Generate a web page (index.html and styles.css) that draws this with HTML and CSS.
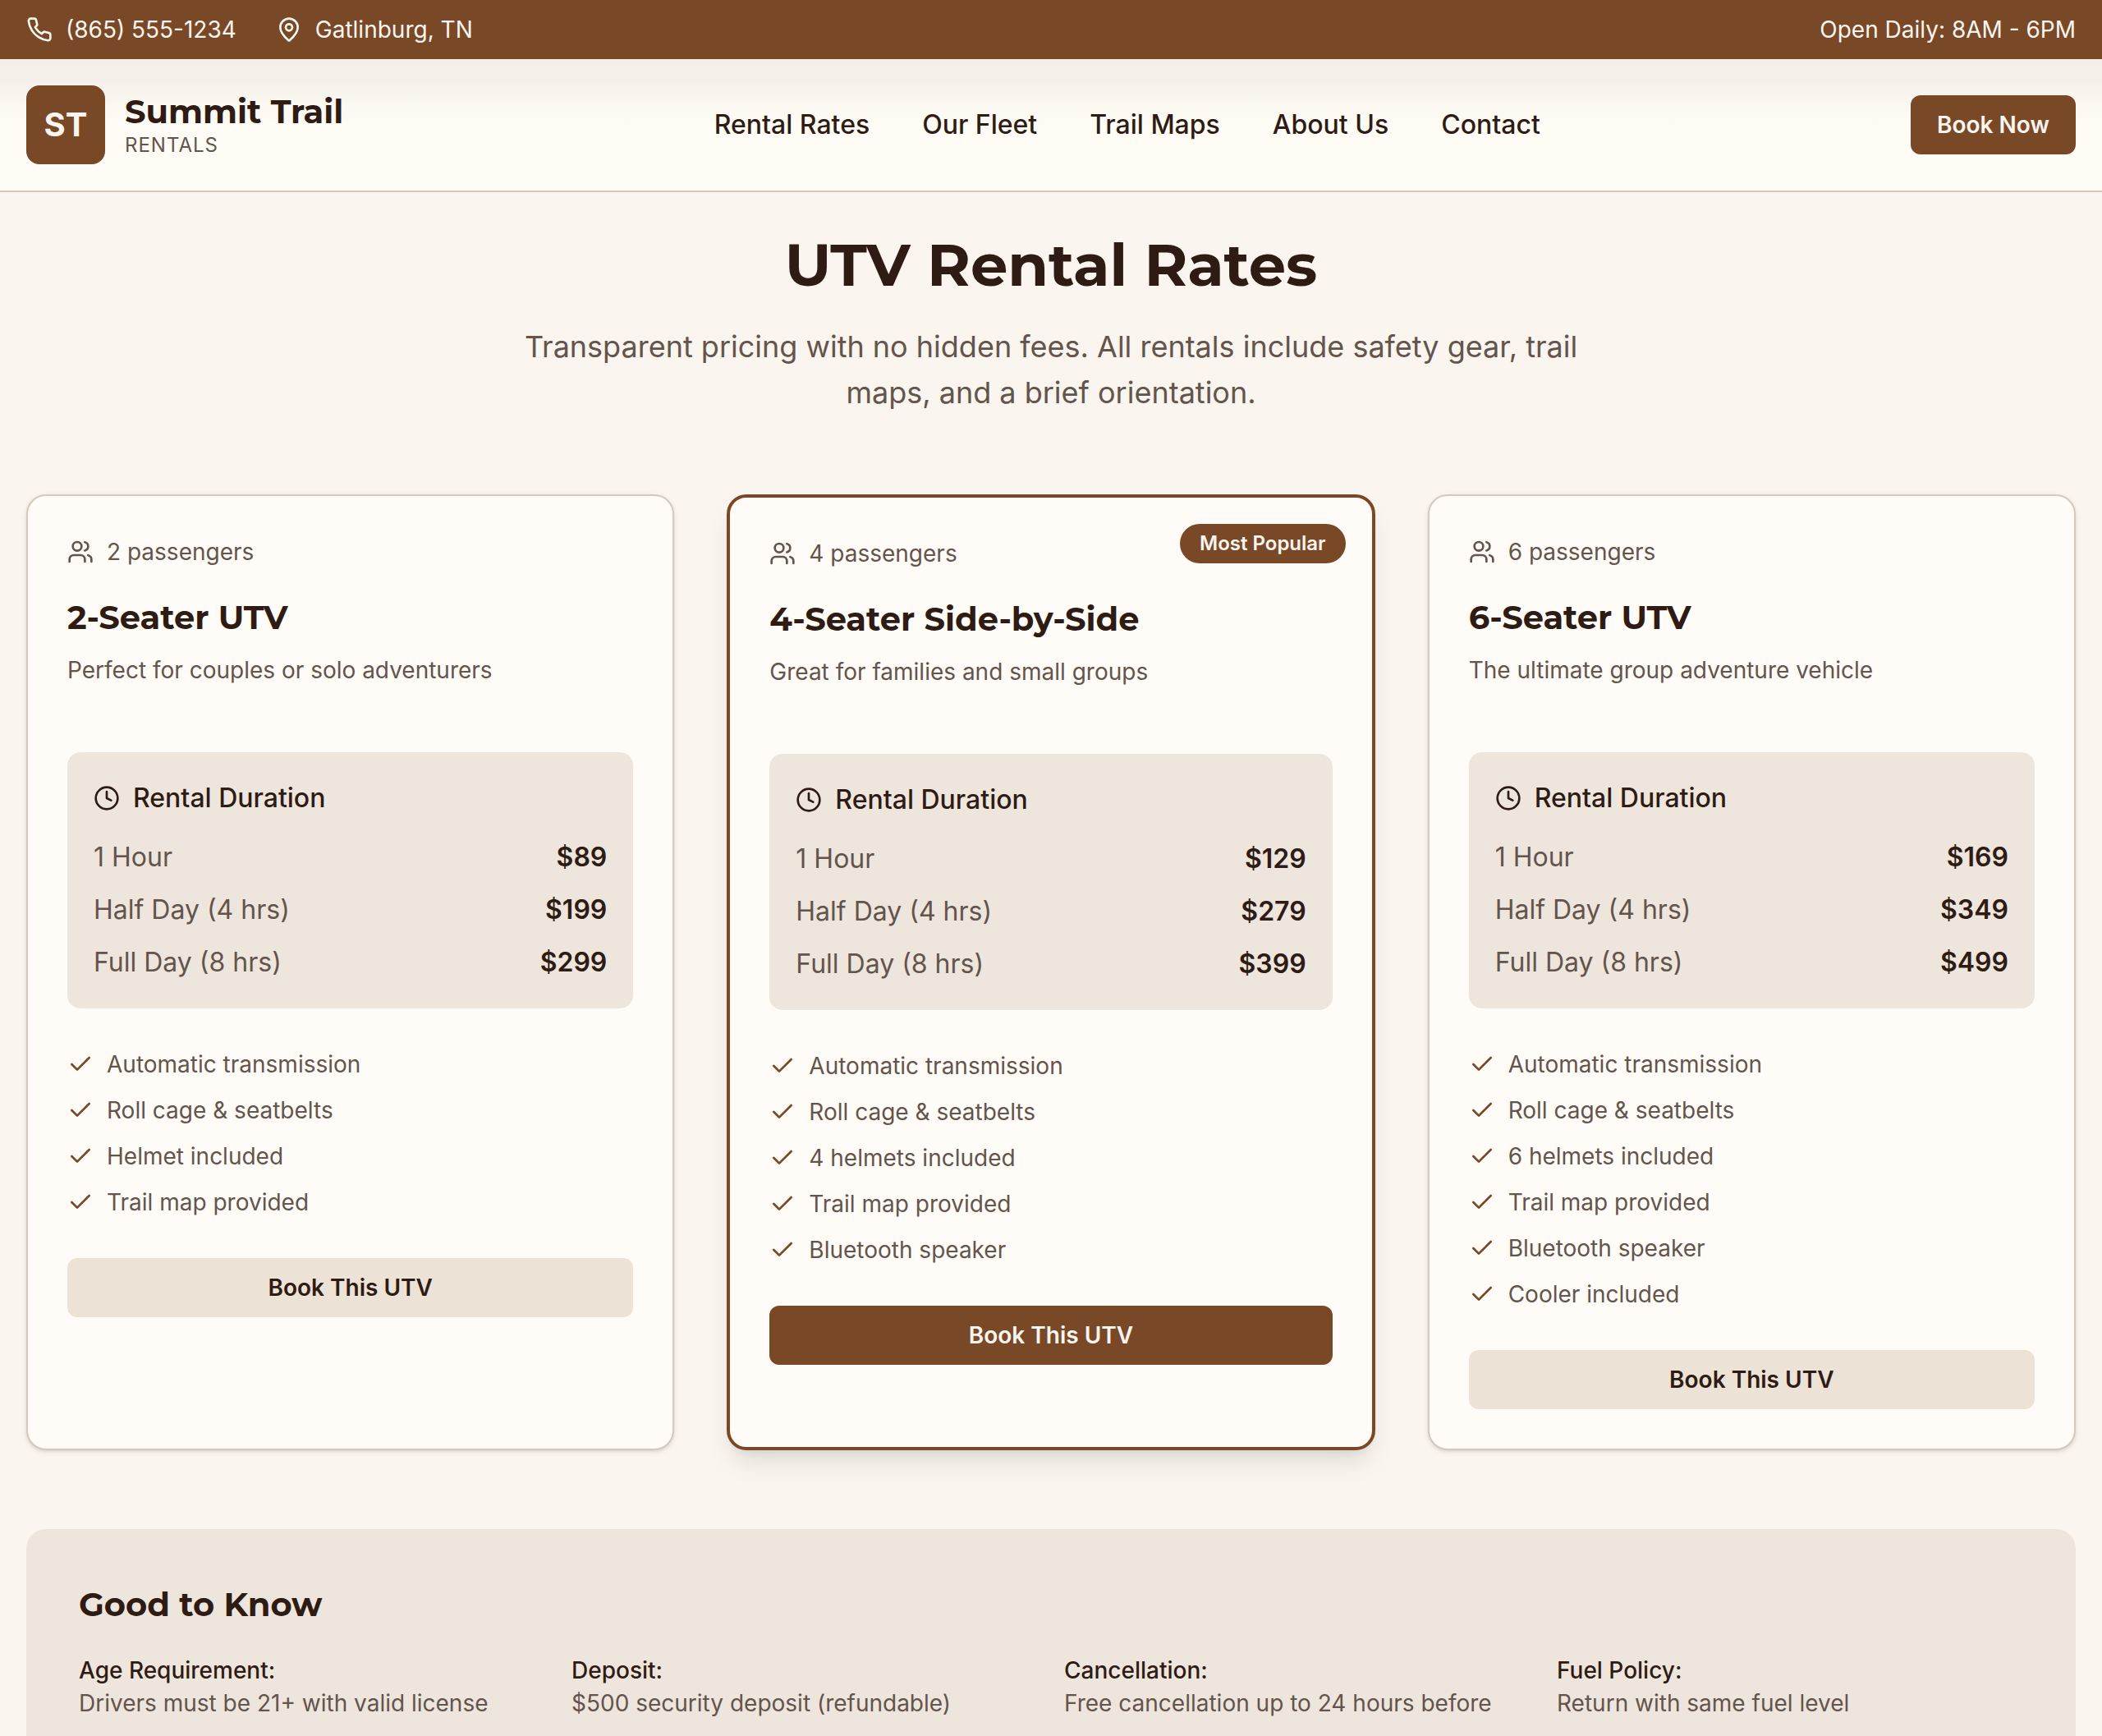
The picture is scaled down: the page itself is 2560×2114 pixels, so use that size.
FILE: index.html
```html
<!doctype html>
<html lang="en">
<head>
<meta charset="utf-8">
<meta name="viewport" content="width=device-width, initial-scale=1">
<title>Summit Trail Rentals - UTV Rental Rates</title>
<link rel="stylesheet" href="styles.css">
</head>

<body>
<!-- icons -->
<svg class="sprite" aria-hidden="true">
	<symbol id="phone" viewBox="0 0 24 24"><path d="M22 16.92v3a2 2 0 0 1-2.18 2 19.79 19.79 0 0 1-8.63-3.07 19.5 19.5 0 0 1-6-6 19.79 19.79 0 0 1-3.07-8.67A2 2 0 0 1 4.11 2h3a2 2 0 0 1 2 1.72 12.84 12.84 0 0 0 .7 2.81 2 2 0 0 1-.45 2.11L8.09 9.91a16 16 0 0 0 6 6l1.27-1.27a2 2 0 0 1 2.11-.45 12.84 12.84 0 0 0 2.81.7A2 2 0 0 1 22 16.92z"/></symbol>
	<symbol id="pin" viewBox="0 0 24 24"><path d="M20 10c0 4.993-5.539 10.193-7.399 11.799a1 1 0 0 1-1.202 0C9.539 20.193 4 14.993 4 10a8 8 0 0 1 16 0"/><circle cx="12" cy="10" r="3"/></symbol>
	<symbol id="users" viewBox="0 0 24 24"><path d="M16 21v-2a4 4 0 0 0-4-4H6a4 4 0 0 0-4 4v2"/><circle cx="9" cy="7" r="4"/><path d="M22 21v-2a4 4 0 0 0-3-3.87"/><path d="M16 3.13a4 4 0 0 1 0 7.75"/></symbol>
	<symbol id="clock" viewBox="0 0 24 24"><circle cx="12" cy="12" r="10"/><path d="M12 6v6l4 2"/></symbol>
	<symbol id="check" viewBox="0 0 24 24"><path d="M20 6 9 17l-5-5"/></symbol>
</svg>

<div class="topbar">
	<div class="contact">
		<a href="tel:8655551234"><svg class="icon"><use href="#phone"/></svg>(865) 555-1234</a>
		<span><svg class="icon"><use href="#pin"/></svg>Gatlinburg, TN</span>
	</div>
	<span>Open Daily: 8AM - 6PM</span>
</div>

<header class="header">
	<a href="#" class="brand">
		<span class="logo">ST</span>
		<span class="brand-text">
			<span class="brand-name">Summit Trail</span>
			<span class="brand-sub">RENTALS</span>
		</span>
	</a>
	<nav class="nav">
		<a href="#rates">Rental Rates</a>
		<a href="#fleet">Our Fleet</a>
		<a href="#maps">Trail Maps</a>
		<a href="#about">About Us</a>
		<a href="#contact">Contact</a>
	</nav>
	<button type="button" class="btn btn-primary">Book Now</button>
</header>

<main class="main" id="rates">
	<div class="intro">
		<h1>UTV Rental Rates</h1>
		<p>Transparent pricing with no hidden fees. All rentals include safety gear, trail maps, and a brief orientation.</p>
	</div>

	<div class="cards" id="fleet">
		<section class="card">
			<div class="seats"><svg class="icon"><use href="#users"/></svg>2 passengers</div>
			<h2>2-Seater UTV</h2>
			<p class="desc">Perfect for couples or solo adventurers</p>
			<div class="rates">
				<h3><svg class="icon"><use href="#clock"/></svg>Rental Duration</h3>
				<table>
					<tr><th scope="row">1 Hour</th><td>$89</td></tr>
					<tr><th scope="row">Half Day (4 hrs)</th><td>$199</td></tr>
					<tr><th scope="row">Full Day (8 hrs)</th><td>$299</td></tr>
				</table>
			</div>
			<ul class="features">
				<li><svg class="icon"><use href="#check"/></svg>Automatic transmission</li>
				<li><svg class="icon"><use href="#check"/></svg>Roll cage &amp; seatbelts</li>
				<li><svg class="icon"><use href="#check"/></svg>Helmet included</li>
				<li><svg class="icon"><use href="#check"/></svg>Trail map provided</li>
			</ul>
			<button type="button" class="btn btn-secondary">Book This UTV</button>
		</section>

		<section class="card card-popular">
			<span class="badge">Most Popular</span>
			<div class="seats"><svg class="icon"><use href="#users"/></svg>4 passengers</div>
			<h2>4-Seater Side-by-Side</h2>
			<p class="desc">Great for families and small groups</p>
			<div class="rates">
				<h3><svg class="icon"><use href="#clock"/></svg>Rental Duration</h3>
				<table>
					<tr><th scope="row">1 Hour</th><td>$129</td></tr>
					<tr><th scope="row">Half Day (4 hrs)</th><td>$279</td></tr>
					<tr><th scope="row">Full Day (8 hrs)</th><td>$399</td></tr>
				</table>
			</div>
			<ul class="features">
				<li><svg class="icon"><use href="#check"/></svg>Automatic transmission</li>
				<li><svg class="icon"><use href="#check"/></svg>Roll cage &amp; seatbelts</li>
				<li><svg class="icon"><use href="#check"/></svg>4 helmets included</li>
				<li><svg class="icon"><use href="#check"/></svg>Trail map provided</li>
				<li><svg class="icon"><use href="#check"/></svg>Bluetooth speaker</li>
			</ul>
			<button type="button" class="btn btn-primary">Book This UTV</button>
		</section>

		<section class="card">
			<div class="seats"><svg class="icon"><use href="#users"/></svg>6 passengers</div>
			<h2>6-Seater UTV</h2>
			<p class="desc">The ultimate group adventure vehicle</p>
			<div class="rates">
				<h3><svg class="icon"><use href="#clock"/></svg>Rental Duration</h3>
				<table>
					<tr><th scope="row">1 Hour</th><td>$169</td></tr>
					<tr><th scope="row">Half Day (4 hrs)</th><td>$349</td></tr>
					<tr><th scope="row">Full Day (8 hrs)</th><td>$499</td></tr>
				</table>
			</div>
			<ul class="features">
				<li><svg class="icon"><use href="#check"/></svg>Automatic transmission</li>
				<li><svg class="icon"><use href="#check"/></svg>Roll cage &amp; seatbelts</li>
				<li><svg class="icon"><use href="#check"/></svg>6 helmets included</li>
				<li><svg class="icon"><use href="#check"/></svg>Trail map provided</li>
				<li><svg class="icon"><use href="#check"/></svg>Bluetooth speaker</li>
				<li><svg class="icon"><use href="#check"/></svg>Cooler included</li>
			</ul>
			<button type="button" class="btn btn-secondary">Book This UTV</button>
		</section>
	</div>

	<section class="info">
		<h2>Good to Know</h2>
		<dl>
			<div><dt>Age Requirement:</dt><dd>Drivers must be 21+ with valid license</dd></div>
			<div><dt>Deposit:</dt><dd>$500 security deposit (refundable)</dd></div>
			<div><dt>Cancellation:</dt><dd>Free cancellation up to 24 hours before</dd></div>
			<div><dt>Fuel Policy:</dt><dd>Return with same fuel level</dd></div>
		</dl>
	</section>
</main>
</body>
</html>
```

FILE: styles.css
```css
*{ box-sizing:border-box; margin:0; padding:0;}
body{ background:#faf5ef; color:#2e1c14; font:28px/40px Inter, "Liberation Sans", sans-serif;}
a{ color:inherit; text-decoration:none;}
h1,h2,.brand-name{ font-family:Montserrat, Inter, sans-serif; font-weight:700;}
h2{ font-size:40px; line-height:56px;}
.sprite{ display:none;}
.icon{ width:32px; height:32px; flex:none; fill:none; stroke:currentColor; stroke-width:2; stroke-linecap:round; stroke-linejoin:round;}

/* top bar */
.topbar{ display:flex; justify-content:space-between; padding:16px 32px; background:#784827; color:#faf5ef;}
.contact{ display:flex; gap:48px;}
.contact a,.contact span{ display:flex; align-items:center; gap:16px;}

/* header */
.header{ display:flex; justify-content:space-between; align-items:center; padding:32px; border-bottom:2px solid #d4c9bc; background:#fffcf5 linear-gradient(#f4efe9 0, #f5f0ea 28px, #fbf7f1 54px, #fffcf5 84px);}
.brand{ display:flex; align-items:center; gap:24px;}
.logo{ display:flex; align-items:center; justify-content:center; width:96px; height:96px; border-radius:16px; background:#784827; color:#faf5ef; font-size:40px; font-weight:700;}
.brand-text{ display:flex; flex-direction:column;}
.brand-name{ font-size:40px; line-height:50px;}
.brand-sub{ color:#63544c; font-size:24px; line-height:32px; letter-spacing:1px;}
.nav{ display:flex; gap:64px; font-size:32px; line-height:48px; font-weight:500;}

/* buttons */
.btn{ height:72px; padding:0 32px; border:0; border-radius:12px; font:600 28px/40px Inter, "Liberation Sans", sans-serif; cursor:pointer;}
.btn-primary{ background:#784827; color:#faf5ef;}
.btn-secondary{ background:#ece2d6; color:#2e1c14;}

/* intro */
.main{ padding:48px 32px;}
.intro{ max-width:1344px; margin:0 auto 96px; text-align:center;}
.intro h1{ margin-bottom:32px; font-size:72px; line-height:80px;}
.intro p{ color:#63544c; font-size:36px; line-height:56px;}

/* rental cards */
.cards{ display:grid; grid-template-columns:repeat(3, 1fr); gap:64px;}
.card{ position:relative; padding:48px; border:2px solid #d4c9bc; border-radius:24px; background:#fffcf7; box-shadow:0 2px 6px rgba(0,0,0,.1), 0 2px 4px -2px rgba(0,0,0,.1);}
.card-popular{ border:4px solid #784827; box-shadow:0 20px 30px -6px rgba(0,0,0,.1), 0 8px 12px -8px rgba(0,0,0,.1);}
.badge{ position:absolute; top:32px; right:32px; padding:8px 24px; border-radius:24px; background:#784827; color:#faf5ef; font-size:24px; line-height:32px; font-weight:600;}
.seats{ display:flex; align-items:center; gap:16px; margin-bottom:32px; color:#63544c;}
.desc{ margin:16px 0 80px; color:#63544c;}
.rates{ padding:32px; border-radius:16px; background:#eee6dd; font-size:32px; line-height:48px;}
.rates h3{ display:flex; align-items:center; gap:16px; margin-bottom:8px; font-size:32px; font-weight:500;}
.rates table{ width:100%; border-collapse:collapse;}
.rates th{ padding-top:16px; color:#63544c; font-weight:400; text-align:left;}
.rates td{ padding-top:16px; font-weight:600; text-align:right;}
.features{ display:flex; flex-direction:column; gap:16px; margin:48px 0; list-style:none; color:#63544c;}
.features li{ display:flex; align-items:center; gap:16px;}
.features .icon{ color:#784827;}
.card .btn{ display:block; width:100%;}

/* good to know */
.info{ margin-top:96px; padding:64px; border-radius:24px; background:#eee6dd;}
.info dl{ display:grid; grid-template-columns:repeat(4, 1fr); gap:32px; margin-top:32px;}
.info dt{ font-weight:500;}
.info dd{ color:#63544c;}
```
